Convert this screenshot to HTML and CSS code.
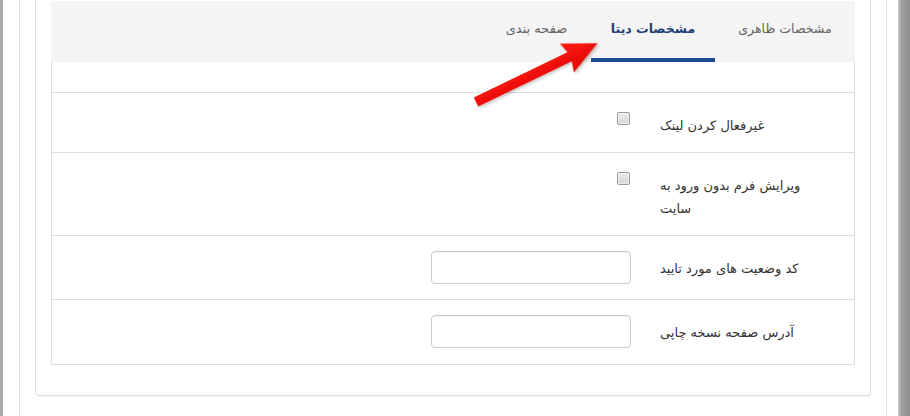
FILE: index.html
```html
<!DOCTYPE html>
<html lang="fa">
<head>
<meta charset="utf-8">
<title>تنظیمات فرم</title>
<link rel="stylesheet" href="styles.css">
</head>
<body>
<div class="screen">
  <div class="edge-left"></div>
  <div class="page">
    <div class="card" dir="rtl">
      <ul class="tabs">
        <li class="tab tab-look">مشخصات ظاهری</li>
        <li class="tab tab-data active">مشخصات دیتا</li>
        <li class="tab tab-paging">صفحه بندی</li>
      </ul>
      <div class="tab-body">
        <div class="row row-empty"></div>
        <div class="row">
          <label class="lbl">غیرفعال کردن لینک</label>
          <div class="ctrl"><input class="chk" type="checkbox"></div>
        </div>
        <div class="row">
          <label class="lbl">ویرایش فرم بدون ورود به سایت</label>
          <div class="ctrl"><input class="chk" type="checkbox"></div>
        </div>
        <div class="row">
          <label class="lbl">کد وضعیت های مورد تایید</label>
          <div class="ctrl"><input class="txt" type="text"></div>
        </div>
        <div class="row row-last">
          <label class="lbl">آدرس صفحه نسخه چاپی</label>
          <div class="ctrl"><input class="txt" type="text"></div>
        </div>
      </div>
    </div>
  </div>
  <div class="edge-right"></div>
  <svg class="arrow" width="910" height="416" viewBox="0 0 910 416">
    <defs>
      <filter id="sh" x="-20%" y="-20%" width="140%" height="140%">
        <feDropShadow dx="1" dy="2" stdDeviation="1.5" flood-color="#000" flood-opacity="0.25"/>
      </filter>
      <linearGradient id="rg" x1="0" y1="0" x2="0" y2="1">
        <stop offset="0" stop-color="#ff1a12"/>
        <stop offset="1" stop-color="#e00800"/>
      </linearGradient>
    </defs>
    <g transform="translate(476 102) rotate(-25.8)" filter="url(#sh)">
      <polygon points="0,-5 104,-5 101,-16 135,0 101,16 104,5 0,5" fill="url(#rg)"/>
    </g>
  </svg>
</div>
</body>
</html>
```
FILE: styles.css
```css
html, body {
  margin: 0;
  padding: 0;
  background: #ffffff;
}

.screen {
  position: relative;
  display: flex;
  width: 910px;
  height: 416px;
  overflow: hidden;
  font-family: "DejaVu Sans", sans-serif;
  color: #333333;
}

.edge-left {
  width: 3px;
  flex: none;
  background: #a9a9a9;
}

.edge-right {
  width: 12px;
  flex: none;
  margin-left: 11px;
  background: linear-gradient(to right, #cfcfcf 0, #a3a3a3 3px, #8e8e8e 100%);
}

.page {
  flex: none;
  width: 868px;
  box-sizing: border-box;
  margin-left: 16px;
  padding: 0 15px;
  border-left: 1px solid #e3e3e3;
  border-right: 1px solid #e3e3e3;
}

.card {
  border: 1px solid #dddddd;
  border-top: none;
  border-radius: 0 0 4px 4px;
  padding: 1px 15px 30px;
  box-shadow: 0 1px 1px rgba(0, 0, 0, 0.03);
}

.tabs {
  list-style: none;
  margin: 0;
  padding: 0;
  display: flex;
  height: 61px;
  background: #f4f4f4;
}

.tab {
  box-sizing: border-box;
  height: 61px;
  padding-top: 18px;
  border-bottom: 4px solid transparent;
  font-size: 12.5px;
  line-height: 20px;
  color: #666666;
  text-align: center;
  white-space: nowrap;
}

.tab-look {
  width: 140px;
}

.tab-data {
  width: 124px;
}

.tab-paging {
  width: 109px;
  font-size: 13px;
}

.tab.active {
  color: #1f3e78;
  font-weight: bold;
  border-bottom-color: #1d4a90;
}

.tab-body {
  border: 1px solid #dddddd;
  border-top: none;
}

.row {
  display: flex;
  gap: 29px;
  padding: 15px 0;
  border-top: 1px solid #dddddd;
}

.row-empty {
  border-top: none;
  padding: 0;
  height: 30px;
}

.row-last {
  padding-bottom: 16px;
}

.lbl {
  flex: none;
  width: 194px;
  box-sizing: border-box;
  padding: 6px 34px 0 0;
  font-size: 13px;
  line-height: 23px;
  text-align: left;
}

.ctrl {
  flex: none;
  width: 200px;
}

.chk {
  appearance: none;
  -webkit-appearance: none;
  display: block;
  box-sizing: border-box;
  width: 13px;
  height: 13px;
  margin: 4px 1px 0 0;
  border: 1px solid #9a9a9a;
  border-radius: 2px;
  background: linear-gradient(#ececec, #d6d6d6);
  box-shadow: inset 0 0 0 1px rgba(255, 255, 255, 0.5);
}

.txt {
  display: block;
  box-sizing: border-box;
  width: 200px;
  height: 33px;
  margin: 0;
  border: 1px solid #cccccc;
  border-radius: 4px;
  background: #ffffff;
  box-shadow: inset 0 1px 1px rgba(0, 0, 0, 0.06);
}

.arrow {
  position: absolute;
  left: 0;
  top: 0;
  pointer-events: none;
}
```
